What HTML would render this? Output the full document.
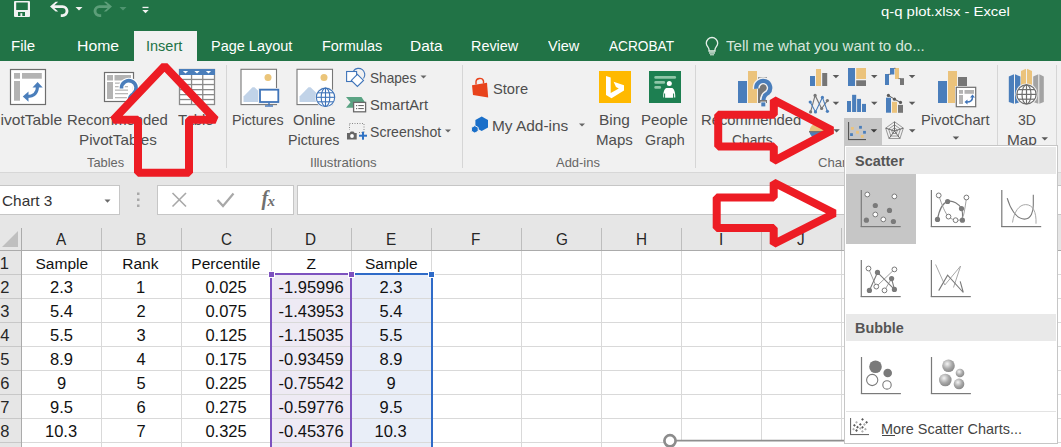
<!DOCTYPE html>
<html><head><meta charset="utf-8">
<style>
html,body{margin:0;padding:0;}
body{width:1061px;height:447px;overflow:hidden;position:relative;background:#fff;font-family:"Liberation Sans",sans-serif;}
.a{position:absolute;}
.tx{position:absolute;white-space:pre;line-height:20px;transform-origin:0 0;font-family:"Liberation Sans",sans-serif;}
svg{position:absolute;overflow:visible;}
</style></head><body>
<div class="a" style="left:0px;top:0px;width:1061px;height:61px;background:#217346;"></div>
<div class="a" style="left:134px;top:31px;width:63px;height:30px;background:#f1f1f1;"></div>
<div class="a" style="left:0px;top:61px;width:1061px;height:111px;background:#f1f1f1;"></div>
<div class="a" style="left:226px;top:65px;width:1px;height:103px;background:#d6d6d6;"></div>
<div class="a" style="left:462px;top:65px;width:1px;height:103px;background:#d6d6d6;"></div>
<div class="a" style="left:695px;top:65px;width:1px;height:103px;background:#d6d6d6;"></div>
<div class="a" style="left:997px;top:65px;width:1px;height:103px;background:#d6d6d6;"></div>
<div class="a" style="left:1056px;top:65px;width:1px;height:103px;background:#d6d6d6;"></div>
<div class="a" style="left:0px;top:172px;width:1061px;height:1px;background:#d7d7d7;"></div>
<div class="a" style="left:0px;top:173px;width:1061px;height:55px;background:#e6e6e6;"></div>
<div class="a" style="left:-1px;top:185px;width:119px;height:28px;background:#ffffff;border:1px solid #c6c6c6;"></div>
<div class="a" style="left:157px;top:185px;width:135px;height:28px;background:#ffffff;border:1px solid #c6c6c6;"></div>
<div class="a" style="left:297px;top:185px;width:800px;height:28px;background:#ffffff;border:1px solid #c6c6c6;"></div>
<div class="a" style="left:0px;top:228px;width:1061px;height:22px;background:#e6e6e6;"></div>
<div class="a" style="left:0px;top:250px;width:1061px;height:1px;background:#ababab;"></div>
<div class="a" style="left:0px;top:251px;width:21px;height:200px;background:#e6e6e6;"></div>
<div class="a" style="left:21px;top:228px;width:1px;height:220px;background:#ababab;"></div>
<div class="a" style="left:101px;top:228px;width:1px;height:22px;background:#bdbdbd;"></div>
<div class="a" style="left:181px;top:228px;width:1px;height:22px;background:#bdbdbd;"></div>
<div class="a" style="left:271px;top:228px;width:1px;height:22px;background:#bdbdbd;"></div>
<div class="a" style="left:351px;top:228px;width:1px;height:22px;background:#bdbdbd;"></div>
<div class="a" style="left:431px;top:228px;width:1px;height:22px;background:#bdbdbd;"></div>
<div class="a" style="left:521px;top:228px;width:1px;height:22px;background:#bdbdbd;"></div>
<div class="a" style="left:601px;top:228px;width:1px;height:22px;background:#bdbdbd;"></div>
<div class="a" style="left:681px;top:228px;width:1px;height:22px;background:#bdbdbd;"></div>
<div class="a" style="left:761px;top:228px;width:1px;height:22px;background:#bdbdbd;"></div>
<div class="a" style="left:841px;top:228px;width:1px;height:22px;background:#bdbdbd;"></div>
<div class="a" style="left:271px;top:275px;width:80px;height:175px;background:#eeeaf4;"></div>
<div class="a" style="left:352px;top:275px;width:80px;height:175px;background:#e9eef8;"></div>
<div class="a" style="left:22px;top:274px;width:1040px;height:1px;background:#d9d9d9;"></div>
<div class="a" style="left:0px;top:274px;width:21px;height:1px;background:#c8c8c8;"></div>
<div class="a" style="left:22px;top:298px;width:1040px;height:1px;background:#d9d9d9;"></div>
<div class="a" style="left:0px;top:298px;width:21px;height:1px;background:#c8c8c8;"></div>
<div class="a" style="left:22px;top:322px;width:1040px;height:1px;background:#d9d9d9;"></div>
<div class="a" style="left:0px;top:322px;width:21px;height:1px;background:#c8c8c8;"></div>
<div class="a" style="left:22px;top:346px;width:1040px;height:1px;background:#d9d9d9;"></div>
<div class="a" style="left:0px;top:346px;width:21px;height:1px;background:#c8c8c8;"></div>
<div class="a" style="left:22px;top:370px;width:1040px;height:1px;background:#d9d9d9;"></div>
<div class="a" style="left:0px;top:370px;width:21px;height:1px;background:#c8c8c8;"></div>
<div class="a" style="left:22px;top:394px;width:1040px;height:1px;background:#d9d9d9;"></div>
<div class="a" style="left:0px;top:394px;width:21px;height:1px;background:#c8c8c8;"></div>
<div class="a" style="left:22px;top:418px;width:1040px;height:1px;background:#d9d9d9;"></div>
<div class="a" style="left:0px;top:418px;width:21px;height:1px;background:#c8c8c8;"></div>
<div class="a" style="left:22px;top:442px;width:1040px;height:1px;background:#d9d9d9;"></div>
<div class="a" style="left:0px;top:442px;width:21px;height:1px;background:#c8c8c8;"></div>
<div class="a" style="left:101px;top:251px;width:1px;height:200px;background:#d9d9d9;"></div>
<div class="a" style="left:181px;top:251px;width:1px;height:200px;background:#d9d9d9;"></div>
<div class="a" style="left:271px;top:251px;width:1px;height:200px;background:#d9d9d9;"></div>
<div class="a" style="left:351px;top:251px;width:1px;height:200px;background:#d9d9d9;"></div>
<div class="a" style="left:431px;top:251px;width:1px;height:200px;background:#d9d9d9;"></div>
<div class="a" style="left:521px;top:251px;width:1px;height:200px;background:#d9d9d9;"></div>
<div class="a" style="left:601px;top:251px;width:1px;height:200px;background:#d9d9d9;"></div>
<div class="a" style="left:681px;top:251px;width:1px;height:200px;background:#d9d9d9;"></div>
<div class="a" style="left:761px;top:251px;width:1px;height:200px;background:#d9d9d9;"></div>
<div class="a" style="left:841px;top:251px;width:1px;height:200px;background:#d9d9d9;"></div>
<div class="a" style="left:270px;top:273px;width:82px;height:2px;background:#7d52bf;"></div>
<div class="a" style="left:270px;top:275px;width:2px;height:175px;background:#7d52bf;"></div>
<div class="a" style="left:350px;top:275px;width:2px;height:175px;background:#7d52bf;"></div>
<div class="a" style="left:352px;top:273px;width:81px;height:2px;background:#2f6bc8;"></div>
<div class="a" style="left:431px;top:275px;width:2px;height:175px;background:#2f6bc8;"></div>
<div class="a" style="left:268px;top:271px;width:7px;height:7px;background:#ffffff;"></div>
<div class="a" style="left:269px;top:272px;width:5px;height:5px;background:#7d52bf;"></div>
<div class="a" style="left:348px;top:271px;width:7px;height:7px;background:#ffffff;"></div>
<div class="a" style="left:349px;top:272px;width:5px;height:5px;background:#7d52bf;"></div>
<div class="a" style="left:428px;top:271px;width:7px;height:7px;background:#ffffff;"></div>
<div class="a" style="left:429px;top:272px;width:5px;height:5px;background:#2f6bc8;"></div>
<div class="a" style="left:672px;top:441px;width:175px;height:6px;background:#ffffff;"></div>
<svg style="left:0;top:0" width="1061" height="447"><line x1="670" y1="440.6" x2="846" y2="440.6" stroke="#8f8f8f" stroke-width="1.6"/><circle cx="670" cy="440.8" r="5.6" fill="#fff" stroke="#8c8c8c" stroke-width="2.7"/></svg>
<div class="a" style="left:844px;top:118px;width:38px;height:28px;background:#c6c6c6;"></div>
<svg style="left:0;top:0" width="1061" height="447" viewBox="0 0 1061 447"><rect x="14" y="1" width="16" height="16" rx="1" fill="#f2f2f2"/><rect x="16.2" y="2.5" width="11.6" height="7.5" fill="#217346"/><rect x="18" y="12" width="7" height="4" fill="#217346"/><rect x="20.4" y="13.2" width="1.9" height="2.8" fill="#f2f2f2"/><g fill="#f2f2f2" stroke="#f2f2f2" stroke-width="0"><polygon points="50,6.6 55.6,1.7 58.2,1.7 54.4,5.2 54.4,8 58.2,11.5 55.6,11.5"/><path d="M54 6.6 H62.5 A4.5 4.5 0 0 1 62.5 15.6 H60.8" fill="none" stroke-width="2.9"/></g><polygon points="75.5,7 82.5,7 79,10.5" fill="#f2f2f2"/><g fill="#5c9e79" stroke="#5c9e79" stroke-width="0" transform="translate(162,0) scale(-1,1)"><polygon points="50,6.6 55.6,1.7 58.2,1.7 54.4,5.2 54.4,8 58.2,11.5 55.6,11.5"/><path d="M54 6.6 H62.5 A4.5 4.5 0 0 1 62.5 15.6 H60.8" fill="none" stroke-width="2.9"/></g><polygon points="119.5,7 126.5,7 123,10.5" fill="#4f9470"/><rect x="142.5" y="6.8" width="6" height="1.3" fill="#f2f2f2"/><polygon points="142.3,10 148.7,10 145.5,13.2" fill="#f2f2f2"/><path d="M709 51 V49.5 C709 47.5 706.3 46 706.3 43.2 A5.7 5.7 0 0 1 717.7 43.2 C717.7 46 715 47.5 715 49.5 V51 Z" fill="none" stroke="#e6efe9" stroke-width="1.3"/><rect x="709" y="52.3" width="6" height="1.3" fill="#e6efe9"/><rect x="710" y="54.3" width="4" height="1" fill="#e6efe9"/><rect x="10.5" y="69.5" width="35" height="35" fill="#fff" stroke="#6e6e6e" stroke-width="1.2"/><rect x="14" y="73" width="6" height="5.7" fill="#b3b3b3"/><rect x="22" y="73" width="19.8" height="5.7" fill="#b3b3b3"/><rect x="14" y="81" width="6" height="19.7" fill="#b3b3b3"/><path d="M27 96.5 Q37.5 96.5 37.5 86" fill="none" stroke="#4a7ebb" stroke-width="3"/><polygon points="22.8,96.6 28.5,91.5 28.5,101.7" fill="#4a7ebb"/><polygon points="37.6,82 32.5,87.5 42.7,87.5" fill="#4a7ebb"/><rect x="104.5" y="72.5" width="29" height="29" fill="#fff" stroke="#6e6e6e" stroke-width="1.2"/><rect x="107" y="75" width="6" height="5.5" fill="#b3b3b3"/><rect x="114.5" y="75" width="16.5" height="5.5" fill="#b3b3b3"/><rect x="107" y="82" width="6" height="17" fill="#b3b3b3"/><rect x="115" y="82.5" width="13" height="1.3" fill="#b8b8b8"/><rect x="115" y="86" width="13" height="1.3" fill="#b8b8b8"/><rect x="115" y="89.5" width="13" height="1.3" fill="#b8b8b8"/><rect x="115" y="93" width="13" height="1.3" fill="#b8b8b8"/><rect x="115" y="97" width="13" height="1.3" fill="#b8b8b8"/><path d="M121.5 88.5 A7.3 7.3 0 1 1 133 94 Q129.5 96 129.5 100" fill="none" stroke="#fff" stroke-width="6"/><path d="M121.5 88.5 A7.3 7.3 0 1 1 133 94 Q129.5 96 129.5 100" fill="none" stroke="#4a7ebb" stroke-width="3.6"/><rect x="179.5" y="69.5" width="35" height="35" fill="#fff" stroke="#8a8a8a" stroke-width="1.3"/><rect x="179" y="69" width="36" height="6" fill="#4a7ebb"/><polygon points="182.9,71 188.1,71 185.5,73.6" fill="#fff"/><polygon points="194.4,71 199.6,71 197,73.6" fill="#fff"/><polygon points="205.9,71 211.1,71 208.5,73.6" fill="#fff"/><rect x="190.9" y="75" width="1.3" height="29" fill="#8a8a8a"/><rect x="202.1" y="75" width="1.3" height="29" fill="#8a8a8a"/><rect x="179.5" y="78.80000000000001" width="35" height="1.3" fill="#8a8a8a"/><rect x="179.5" y="83.9" width="35" height="1.3" fill="#8a8a8a"/><rect x="179.5" y="89.0" width="35" height="1.3" fill="#8a8a8a"/><rect x="179.5" y="94.0" width="35" height="1.3" fill="#8a8a8a"/><rect x="179.5" y="98.9" width="35" height="1.3" fill="#8a8a8a"/><rect x="241.0" y="69.3" width="35.5" height="35.3" fill="#fff" stroke="#777" stroke-width="1.1"/><circle cx="268.0" cy="77.4" r="3.5" fill="#ebc57a"/><polygon points="243.5,102 243.5,96.5 252.5,87.3 254.5,87.3 260.5,93 260.5,102" fill="#c1d3e8"/><rect x="258" y="88" width="22" height="16" fill="#f1f1f1"/><rect x="260" y="89.7" width="18.3" height="12.3" fill="#fff" stroke="#3f74b9" stroke-width="1.8"/><rect x="268.3" y="102.5" width="1.4" height="3" fill="#3f74b9"/><rect x="265" y="105.3" width="8" height="1.4" fill="#3f74b9"/><rect x="297.0" y="69.3" width="35.5" height="35.3" fill="#fff" stroke="#777" stroke-width="1.1"/><circle cx="324.0" cy="77.4" r="3.5" fill="#ebc57a"/><polygon points="299.5,102 299.5,96.5 308.5,87.3 310.5,87.3 316.5,93 316.5,102" fill="#c1d3e8"/><circle cx="325.5" cy="97.3" r="10.5" fill="#f1f1f1"/><g fill="none" stroke="#3f74b9" stroke-width="1.1"><circle cx="325.5" cy="97.3" r="9.2" fill="#fff"/><ellipse cx="325.5" cy="97.3" rx="4.3" ry="9.2"/><line x1="325.5" y1="88.1" x2="325.5" y2="106.5"/><line x1="316.3" y1="97.3" x2="334.7" y2="97.3"/><line x1="317.5" y1="92.8" x2="333.5" y2="92.8"/><line x1="317.5" y1="101.8" x2="333.5" y2="101.8"/></g><g fill="#fff" stroke="#3f74b9" stroke-width="1.1"><path d="M353.5 70.8 A6.3 6.3 0 1 1 363.5 78.5" fill="none"/><rect x="346.6" y="71.5" width="10" height="10"/><polygon points="357.4,74.3 363.5,80.4 357.4,86.5 351.3,80.4"/></g><polygon points="346,97 361.5,97 365,102.3 361.5,107.7 346,107.7 350.5,102.3" fill="#5aa383"/><rect x="353.6" y="102.4" width="12" height="9.4" fill="#fff" stroke="#6a6a6a" stroke-width="1.3"/><g fill="#6a6a6a"><rect x="356" y="105" width="1.2" height="1.2"/><rect x="358.3" y="105" width="5.5" height="1.1"/><rect x="356" y="108" width="1.2" height="1.2"/><rect x="358.3" y="108" width="5.5" height="1.1"/></g><rect x="349.5" y="123.5" width="14.5" height="9" fill="none" stroke="#888" stroke-width="1" stroke-dasharray="1,1.5"/><rect x="346.5" y="130" width="12" height="10" fill="#f1f1f1"/><path d="M347 133 h2.5 l1.3 -1.6 h2.6 l1.3 1.6 h2 v6.5 h-9.7 z" fill="#666"/><circle cx="352" cy="136" r="1.9" fill="#fff"/><rect x="359" y="134.7" width="8" height="2" fill="#2e72c4"/><rect x="362" y="131.7" width="2" height="8" fill="#2e72c4"/><polygon points="420.5,75.5 426.5,75.5 423.5,78.5" fill="#666"/><polygon points="445,129.5 451,129.5 448,132.5" fill="#666"/><path d="M476 84.5 V81.5 A3.8 3.3 0 0 1 483.5 81 V83.5" fill="none" stroke="#e8431c" stroke-width="1.4"/><polygon points="472,85.3 487,82.8 488.2,97.6 473,95" fill="#e8431c"/><polygon points="481.7,116.4 488,120 488,127.5 481.7,131 475.4,127.5 475.4,120" fill="#1a6fc9"/><polygon points="474.8,125.6 478.2,127.5 478.2,131.2 474.8,133.1 471.4,131.2 471.4,127.5" fill="#1a6fc9" stroke="#f1f1f1" stroke-width="1"/><polygon points="579,123.5 585,123.5 582,126.5" fill="#666"/><rect x="599" y="71" width="32" height="32" fill="#ffb900"/><polygon points="606,76 610.7,77.5 610.7,93 618.8,88.5 616,87 613.6,81.7 624,85.3 624,90.6 611.5,98.3 606,95" fill="#fff"/><rect x="649" y="71" width="32" height="32" fill="#1d7f51"/><g fill="#8fc6a8"><rect x="654.3" y="76" width="21.8" height="2.7" rx="1.3"/><rect x="654.3" y="81" width="10.8" height="2.7" rx="1.3"/><rect x="654.3" y="86" width="6.8" height="2.7" rx="1.3"/></g><circle cx="669.3" cy="83.5" r="2.5" fill="#fff"/><path d="M663.3 97.5 C663 92 664.5 88.5 666.5 88 h5.5 C674 88.5 675.5 92 675.3 97.5 h-1.2 v-4 h-1 v4.2 h-8 v-4.2 h-1 v4 z" fill="#fff"/><rect x="738" y="81" width="9" height="22" fill="#4a7ebb"/><rect x="748" y="71" width="9" height="32" fill="#ebc37c"/><rect x="758" y="77.3" width="9" height="25.7" fill="#767676"/><path d="M756.3 88.8 A7 7 0 1 1 768 93 Q763.5 95.5 763.5 100" fill="none" stroke="#f1f1f1" stroke-width="7"/><path d="M756.3 88.8 A7 7 0 1 1 768 93 Q763.5 95.5 763.5 100" fill="none" stroke="#4a7ebb" stroke-width="4.2"/><rect x="760.5" y="101.6" width="5.5" height="5.5" fill="#f1f1f1"/><rect x="761.3" y="102.4" width="4" height="4" fill="#4a7ebb"/><rect x="810" y="76" width="5" height="10" fill="#4a7ebb"/><rect x="816" y="69" width="5" height="17" fill="#ebc37c"/><rect x="822.2" y="73" width="5" height="13" fill="#767676"/><polygon points="832.7,75 839.2,75 835.95,78.2" fill="#5a5a5a"/><rect x="848" y="68" width="7" height="18" fill="#4a7ebb"/><rect x="856.2" y="68" width="9.8" height="11" fill="#ebc37c"/><rect x="856.2" y="80.3" width="9.8" height="5.7" fill="#767676"/><polygon points="871,75 877.5,75 874.25,78.2" fill="#5a5a5a"/><rect x="885" y="74" width="4" height="11" fill="#4a7ebb"/><rect x="890" y="68" width="4.3" height="6.5" fill="#4a7ebb"/><rect x="895" y="68" width="4" height="11" fill="#ebc37c"/><rect x="900" y="78.2" width="4" height="6.8" fill="#767676"/><g stroke="#5a5a5a" stroke-width="0.8"><line x1="888.5" y1="74.3" x2="890.5" y2="74.3"/><line x1="894" y1="68.3" x2="895.5" y2="68.3"/><line x1="898.5" y1="78.6" x2="900.5" y2="78.6"/></g><polygon points="908.8,75 915.3,75 912.05,78.2" fill="#5a5a5a"/><polyline points="810.6,111.9 815.1,95.4 821.6,108.5 827.4,100.6" fill="none" stroke="#767676" stroke-width="1.1"/><polyline points="810.2,102 815.5,111.9 822.4,97.4 827.4,111.3" fill="none" stroke="#4a7ebb" stroke-width="1.1"/><circle cx="810.6" cy="111.9" r="1.6" fill="#767676"/><circle cx="815.1" cy="95.4" r="1.6" fill="#767676"/><circle cx="821.6" cy="108.5" r="1.6" fill="#767676"/><circle cx="827.4" cy="100.6" r="1.6" fill="#767676"/><circle cx="810.2" cy="102" r="1.6" fill="#4a7ebb"/><circle cx="815.5" cy="111.9" r="1.6" fill="#4a7ebb"/><circle cx="822.4" cy="97.4" r="1.6" fill="#4a7ebb"/><circle cx="827.4" cy="111.3" r="1.6" fill="#4a7ebb"/><polygon points="832.7,101.8 839.2,101.8 835.95,105.0" fill="#5a5a5a"/><g fill="#4a7ebb"><rect x="847" y="101" width="4" height="11"/><rect x="852.1" y="94.8" width="4.1" height="17.2"/><rect x="857.1" y="98.9" width="3.9" height="13.1"/><rect x="862" y="103.9" width="4" height="8.1"/></g><polygon points="871,101.8 877.5,101.8 874.25,105.0" fill="#5a5a5a"/><rect x="886" y="97.7" width="5" height="15" fill="#4a7ebb"/><rect x="892" y="101.8" width="5" height="11" fill="#ebc37c"/><rect x="898" y="104.9" width="5" height="7.9" fill="#767676"/><polyline points="888.4,95.4 894.5,99.2 900.5,102.4" fill="none" stroke="#5a5a5a" stroke-width="1"/><circle cx="888.4" cy="95.4" r="1.6" fill="#5a5a5a"/><circle cx="894.5" cy="99.2" r="1.6" fill="#5a5a5a"/><circle cx="900.5" cy="102.4" r="1.6" fill="#5a5a5a"/><polygon points="908.8,101.8 915.3,101.8 912.05,105.0" fill="#5a5a5a"/><path d="M817 131 L809.5 131 A7.5 7.5 0 0 1 824.5 131 Z" fill="#ebc37c"/><path d="M817 131 L824.5 131 A7.5 7.5 0 0 1 809.5 131 Z" fill="#4a7ebb"/><rect x="809" y="131" width="16" height="1.5" fill="#767676"/><polygon points="833.3,129.3 839.8,129.3 836.55,132.5" fill="#5a5a5a"/><rect x="848" y="122" width="1.1" height="18" fill="#555"/><rect x="848" y="139" width="18" height="1.1" fill="#555"/><rect x="851.0" y="127.0" width="2.8" height="2.8" fill="#ebc37c"/><rect x="859.1" y="125.89999999999999" width="2.8" height="2.8" fill="#4a7ebb"/><rect x="856.1" y="130.9" width="2.8" height="2.8" fill="#ebc37c"/><rect x="863.1" y="130.9" width="2.8" height="2.8" fill="#4a7ebb"/><rect x="850.1" y="133.2" width="2.8" height="2.8" fill="#4a7ebb"/><rect x="860.8000000000001" y="135.0" width="2.8" height="2.8" fill="#ebc37c"/><polygon points="870.7,129.2 877.2,129.2 873.95,132.39999999999998" fill="#3b3b3b"/><g fill="none" stroke="#8c8c8c" stroke-width="0.9"><polygon points="894.50,121.70 903.34,128.13 899.97,138.52 889.03,138.52 885.66,128.13"/><polygon points="894.50,124.80 900.40,129.08 898.14,136.02 890.86,136.02 888.60,129.08"/><polygon points="894.50,127.90 897.45,130.04 896.32,133.51 892.68,133.51 891.55,130.04"/></g><g stroke="#6a6a6a" stroke-width="1"><line x1="894.5" y1="131" x2="894.50" y2="121.70"/><line x1="894.5" y1="131" x2="903.34" y2="128.13"/><line x1="894.5" y1="131" x2="899.97" y2="138.52"/><line x1="894.5" y1="131" x2="889.03" y2="138.52"/><line x1="894.5" y1="131" x2="885.66" y2="128.13"/></g><polygon points="909,129.3 915.5,129.3 912.25,132.5" fill="#5a5a5a"/><rect x="938" y="81" width="9" height="22" fill="#4a7ebb"/><rect x="948" y="71" width="9" height="32" fill="#ebc37c"/><rect x="958" y="77" width="9" height="10" fill="#767676"/><rect x="955" y="86" width="22" height="22" fill="#f1f1f1"/><rect x="956.3" y="87.3" width="19.4" height="19.4" fill="#fff" stroke="#6e6e6e" stroke-width="1.2"/><rect x="959" y="90" width="4" height="3.8" fill="#b3b3b3"/><rect x="964.5" y="90" width="9.5" height="3.8" fill="#b3b3b3"/><rect x="959" y="95" width="4" height="9" fill="#b3b3b3"/><path d="M967 102 Q972.5 102 972.5 97" fill="none" stroke="#3f74b9" stroke-width="1.5"/><polygon points="964.5,102 967.5,99.5 967.5,104.5" fill="#3f74b9"/><polygon points="972.5,94.5 970,97.5 975,97.5" fill="#3f74b9"/><polygon points="952.7,136.5 959.2,136.5 955.95,139.7" fill="#5a5a5a"/><polygon points="1008.8,76.5 1014,74.3 1014,103.8 1008.8,102" fill="#4a7ebb"/><polygon points="1015,74.3 1020.4,76.5 1020.4,102 1015,103.8" fill="#4a7ebb"/><polygon points="1021,71 1026,68.8 1026,90 1021,90" fill="#ebc37c"/><polygon points="1027,68.8 1032,71 1032,90 1027,90" fill="#ebc37c"/><polygon points="1033.2,76.5 1038.3,74.3 1038.3,103.8 1033.2,102" fill="#a3a3a3"/><polygon points="1039.3,74.3 1043.8,76.5 1043.8,102 1039.3,103.8" fill="#a3a3a3"/><circle cx="1026.5" cy="94.4" r="11" fill="#f1f1f1"/><g fill="none" stroke="#6e6e6e" stroke-width="1.2"><circle cx="1026.5" cy="94.4" r="9.6" fill="#fff"/><ellipse cx="1026.5" cy="94.4" rx="4.5" ry="9.6"/><line x1="1026.5" y1="84.8" x2="1026.5" y2="104"/><line x1="1016.9" y1="94.4" x2="1036.1" y2="94.4"/><line x1="1018" y1="89.6" x2="1035" y2="89.6"/><line x1="1018" y1="99.2" x2="1035" y2="99.2"/></g><polygon points="1041.5,137.2 1048.0,137.2 1044.75,140.39999999999998" fill="#5a5a5a"/><polygon points="104.5,199.5 110.5,199.5 107.5,202.8" fill="#6a6a6a"/><rect x="137" y="192.5" width="2.5" height="2.5" fill="#a8a8a8"/><rect x="137" y="198.5" width="2.5" height="2.5" fill="#a8a8a8"/><rect x="137" y="204.5" width="2.5" height="2.5" fill="#a8a8a8"/><g stroke="#a8a8a8" stroke-width="1.6"><line x1="172.5" y1="193" x2="186" y2="206.5"/><line x1="186" y1="193" x2="172.5" y2="206.5"/></g><polyline points="217.5,200 223,206 233.5,193.5" fill="none" stroke="#a8a8a8" stroke-width="2.2"/><text x="261.5" y="205" font-family="Liberation Serif" font-style="italic" font-weight="bold" font-size="20" fill="#707070">f</text><text x="267.5" y="206" font-family="Liberation Serif" font-style="italic" font-weight="bold" font-size="15" fill="#707070">x</text><polygon points="18,231 18,247 2,247" fill="#bfbfbf"/></svg>
<span class="tx" style="left:881.00px;top:2px;font-size:13px;color:#ffffff;font-weight:normal;transform:scaleX(1.1435)">q-q plot.xlsx - Excel</span>
<span class="tx" style="left:11.33px;top:36px;font-size:15.5px;color:#ffffff;font-weight:normal;transform:scaleX(0.9677)">File</span>
<span class="tx" style="left:76.58px;top:36px;font-size:15.5px;color:#ffffff;font-weight:normal;transform:scaleX(1.0170)">Home</span>
<span class="tx" style="left:211.07px;top:36px;font-size:15.5px;color:#ffffff;font-weight:normal;transform:scaleX(0.9339)">Page Layout</span>
<span class="tx" style="left:321.57px;top:36px;font-size:15.5px;color:#ffffff;font-weight:normal;transform:scaleX(0.9319)">Formulas</span>
<span class="tx" style="left:410.00px;top:36px;font-size:15.5px;color:#ffffff;font-weight:normal;transform:scaleX(0.9963)">Data</span>
<span class="tx" style="left:471.07px;top:36px;font-size:15.5px;color:#ffffff;font-weight:normal;transform:scaleX(0.9283)">Review</span>
<span class="tx" style="left:548.00px;top:36px;font-size:15.5px;color:#ffffff;font-weight:normal;transform:scaleX(0.9378)">View</span>
<span class="tx" style="left:609.00px;top:36px;font-size:15.5px;color:#ffffff;font-weight:normal;transform:scaleX(0.8815)">ACROBAT</span>
<span class="tx" style="left:146.06px;top:36px;font-size:15.5px;color:#217346;font-weight:normal;transform:scaleX(0.9361)">Insert</span>
<span class="tx" style="left:725.50px;top:36px;font-size:15.5px;color:#d7e6dc;font-weight:normal;transform:scaleX(0.9735)">Tell me what you want to do...</span>
<span class="tx" style="left:-10.08px;top:110px;font-size:14.5px;color:#4e4e4e;font-weight:normal;transform:scaleX(1.0784)">PivotTable</span>
<span class="tx" style="left:67.47px;top:110px;font-size:14.5px;color:#4e4e4e;font-weight:normal;transform:scaleX(1.0261)">Recommended</span>
<span class="tx" style="left:79.45px;top:130px;font-size:14.5px;color:#4e4e4e;font-weight:normal;transform:scaleX(1.0494)">PivotTables</span>
<span class="tx" style="left:178.40px;top:110px;font-size:14.5px;color:#4e4e4e;font-weight:normal;transform:scaleX(1.0289)">Table</span>
<span class="tx" style="left:87.10px;top:153px;font-size:13px;color:#666666;font-weight:normal;transform:scaleX(0.9874)">Tables</span>
<span class="tx" style="left:232.42px;top:110px;font-size:14.5px;color:#4e4e4e;font-weight:normal;transform:scaleX(0.9838)">Pictures</span>
<span class="tx" style="left:293.00px;top:110px;font-size:14.5px;color:#4e4e4e;font-weight:normal;transform:scaleX(1.0155)">Online</span>
<span class="tx" style="left:288.32px;top:130px;font-size:14.5px;color:#4e4e4e;font-weight:normal;transform:scaleX(0.9818)">Pictures</span>
<span class="tx" style="left:309.79px;top:153px;font-size:13px;color:#666666;font-weight:normal;transform:scaleX(1.0146)">Illustrations</span>
<span class="tx" style="left:369.50px;top:68px;font-size:14.5px;color:#4e4e4e;font-weight:normal;transform:scaleX(0.9402)">Shapes</span>
<span class="tx" style="left:369.50px;top:95px;font-size:14.5px;color:#4e4e4e;font-weight:normal;transform:scaleX(1.0145)">SmartArt</span>
<span class="tx" style="left:369.50px;top:122px;font-size:14.5px;color:#4e4e4e;font-weight:normal;transform:scaleX(0.9697)">Screenshot</span>
<span class="tx" style="left:493.00px;top:79px;font-size:14.5px;color:#4e4e4e;font-weight:normal;transform:scaleX(1.0118)">Store</span>
<span class="tx" style="left:491.94px;top:116px;font-size:14.5px;color:#4e4e4e;font-weight:normal;transform:scaleX(1.0635)">My Add-ins</span>
<span class="tx" style="left:598.94px;top:110px;font-size:14.5px;color:#4e4e4e;font-weight:normal;transform:scaleX(1.0623)">Bing</span>
<span class="tx" style="left:596.46px;top:130px;font-size:14.5px;color:#4e4e4e;font-weight:normal;transform:scaleX(1.0378)">Maps</span>
<span class="tx" style="left:640.96px;top:110px;font-size:14.5px;color:#4e4e4e;font-weight:normal;transform:scaleX(1.0366)">People</span>
<span class="tx" style="left:645.30px;top:130px;font-size:14.5px;color:#4e4e4e;font-weight:normal;transform:scaleX(0.9867)">Graph</span>
<span class="tx" style="left:556.00px;top:153px;font-size:13px;color:#666666;font-weight:normal;transform:scaleX(0.9960)">Add-ins</span>
<span class="tx" style="left:701.38px;top:110px;font-size:14.5px;color:#4e4e4e;font-weight:normal;transform:scaleX(1.0199)">Recommended</span>
<span class="tx" style="left:732.00px;top:130px;font-size:14.5px;color:#4e4e4e;font-weight:normal;transform:scaleX(0.9516)">Charts</span>
<span class="tx" style="left:818.00px;top:153px;font-size:13px;color:#666666;font-weight:normal;transform:scaleX(1.0054)">Charts</span>
<span class="tx" style="left:921.49px;top:110px;font-size:14.5px;color:#4e4e4e;font-weight:normal;transform:scaleX(1.0125)">PivotChart</span>
<span class="tx" style="left:1017.70px;top:110px;font-size:14.5px;color:#4e4e4e;font-weight:normal;transform:scaleX(0.9688)">3D</span>
<span class="tx" style="left:1006.54px;top:130px;font-size:14.5px;color:#4e4e4e;font-weight:normal;transform:scaleX(1.0611)">Map</span>
<span class="tx" style="left:2.00px;top:191px;font-size:15px;color:#333333;font-weight:normal;transform:scaleX(1.0236)">Chart 3</span>
<span class="tx" style="left:56.10px;top:230px;font-size:17px;color:#262626;font-weight:normal;transform:scaleX(0.9000)">A</span>
<span class="tx" style="left:135.60px;top:230px;font-size:17px;color:#262626;font-weight:normal;transform:scaleX(0.9000)">B</span>
<span class="tx" style="left:220.60px;top:230px;font-size:17px;color:#262626;font-weight:normal;transform:scaleX(0.9000)">C</span>
<span class="tx" style="left:305.15px;top:230px;font-size:17px;color:#262626;font-weight:normal;transform:scaleX(0.9000)">D</span>
<span class="tx" style="left:385.60px;top:230px;font-size:17px;color:#262626;font-weight:normal;transform:scaleX(0.9000)">E</span>
<span class="tx" style="left:471.05px;top:230px;font-size:17px;color:#262626;font-weight:normal;transform:scaleX(0.9000)">F</span>
<span class="tx" style="left:555.60px;top:230px;font-size:17px;color:#262626;font-weight:normal;transform:scaleX(0.9000)">G</span>
<span class="tx" style="left:635.60px;top:230px;font-size:17px;color:#262626;font-weight:normal;transform:scaleX(0.9000)">H</span>
<span class="tx" style="left:718.75px;top:230px;font-size:17px;color:#262626;font-weight:normal;transform:scaleX(0.9000)">I</span>
<span class="tx" style="left:797.40px;top:230px;font-size:17px;color:#262626;font-weight:normal;transform:scaleX(0.9000)">J</span>
<span class="tx" style="left:35.53px;top:254px;font-size:15.5px;color:#111111;font-weight:normal;transform:scaleX(1.0000)">Sample</span>
<span class="tx" style="left:122.28px;top:254px;font-size:15.5px;color:#111111;font-weight:normal;transform:scaleX(1.0000)">Rank</span>
<span class="tx" style="left:191.35px;top:254px;font-size:15.5px;color:#111111;font-weight:normal;transform:scaleX(1.0000)">Percentile</span>
<span class="tx" style="left:306.50px;top:254px;font-size:15.5px;color:#111111;font-weight:normal;transform:scaleX(1.0000)">Z</span>
<span class="tx" style="left:365.03px;top:254px;font-size:15.5px;color:#111111;font-weight:normal;transform:scaleX(1.0000)">Sample</span>
<span class="tx" style="left:50.12px;top:277px;font-size:16.5px;color:#111111;font-weight:normal;transform:scaleX(1.0000)">2.3</span>
<span class="tx" style="left:136.00px;top:277px;font-size:16.5px;color:#111111;font-weight:normal;transform:scaleX(1.0000)">1</span>
<span class="tx" style="left:205.44px;top:277px;font-size:16.5px;color:#111111;font-weight:normal;transform:scaleX(1.0000)">0.025</span>
<span class="tx" style="left:278.52px;top:277px;font-size:16.5px;color:#111111;font-weight:normal;transform:scaleX(1.0000)">-1.95996</span>
<span class="tx" style="left:379.62px;top:277px;font-size:16.5px;color:#111111;font-weight:normal;transform:scaleX(1.0000)">2.3</span>
<span class="tx" style="left:50.12px;top:301px;font-size:16.5px;color:#111111;font-weight:normal;transform:scaleX(1.0000)">5.4</span>
<span class="tx" style="left:136.50px;top:301px;font-size:16.5px;color:#111111;font-weight:normal;transform:scaleX(1.0000)">2</span>
<span class="tx" style="left:205.44px;top:301px;font-size:16.5px;color:#111111;font-weight:normal;transform:scaleX(1.0000)">0.075</span>
<span class="tx" style="left:278.52px;top:301px;font-size:16.5px;color:#111111;font-weight:normal;transform:scaleX(1.0000)">-1.43953</span>
<span class="tx" style="left:379.62px;top:301px;font-size:16.5px;color:#111111;font-weight:normal;transform:scaleX(1.0000)">5.4</span>
<span class="tx" style="left:50.12px;top:325px;font-size:16.5px;color:#111111;font-weight:normal;transform:scaleX(1.0000)">5.5</span>
<span class="tx" style="left:136.50px;top:325px;font-size:16.5px;color:#111111;font-weight:normal;transform:scaleX(1.0000)">3</span>
<span class="tx" style="left:205.44px;top:325px;font-size:16.5px;color:#111111;font-weight:normal;transform:scaleX(1.0000)">0.125</span>
<span class="tx" style="left:278.52px;top:325px;font-size:16.5px;color:#111111;font-weight:normal;transform:scaleX(1.0000)">-1.15035</span>
<span class="tx" style="left:379.62px;top:325px;font-size:16.5px;color:#111111;font-weight:normal;transform:scaleX(1.0000)">5.5</span>
<span class="tx" style="left:50.12px;top:349px;font-size:16.5px;color:#111111;font-weight:normal;transform:scaleX(1.0000)">8.9</span>
<span class="tx" style="left:136.50px;top:349px;font-size:16.5px;color:#111111;font-weight:normal;transform:scaleX(1.0000)">4</span>
<span class="tx" style="left:205.44px;top:349px;font-size:16.5px;color:#111111;font-weight:normal;transform:scaleX(1.0000)">0.175</span>
<span class="tx" style="left:278.52px;top:349px;font-size:16.5px;color:#111111;font-weight:normal;transform:scaleX(1.0000)">-0.93459</span>
<span class="tx" style="left:379.62px;top:349px;font-size:16.5px;color:#111111;font-weight:normal;transform:scaleX(1.0000)">8.9</span>
<span class="tx" style="left:57.00px;top:373px;font-size:16.5px;color:#111111;font-weight:normal;transform:scaleX(1.0000)">9</span>
<span class="tx" style="left:136.50px;top:373px;font-size:16.5px;color:#111111;font-weight:normal;transform:scaleX(1.0000)">5</span>
<span class="tx" style="left:205.44px;top:373px;font-size:16.5px;color:#111111;font-weight:normal;transform:scaleX(1.0000)">0.225</span>
<span class="tx" style="left:278.52px;top:373px;font-size:16.5px;color:#111111;font-weight:normal;transform:scaleX(1.0000)">-0.75542</span>
<span class="tx" style="left:386.50px;top:373px;font-size:16.5px;color:#111111;font-weight:normal;transform:scaleX(1.0000)">9</span>
<span class="tx" style="left:50.12px;top:397px;font-size:16.5px;color:#111111;font-weight:normal;transform:scaleX(1.0000)">9.5</span>
<span class="tx" style="left:136.50px;top:397px;font-size:16.5px;color:#111111;font-weight:normal;transform:scaleX(1.0000)">6</span>
<span class="tx" style="left:205.44px;top:397px;font-size:16.5px;color:#111111;font-weight:normal;transform:scaleX(1.0000)">0.275</span>
<span class="tx" style="left:278.52px;top:397px;font-size:16.5px;color:#111111;font-weight:normal;transform:scaleX(1.0000)">-0.59776</span>
<span class="tx" style="left:379.62px;top:397px;font-size:16.5px;color:#111111;font-weight:normal;transform:scaleX(1.0000)">9.5</span>
<span class="tx" style="left:45.03px;top:421px;font-size:16.5px;color:#111111;font-weight:normal;transform:scaleX(1.0000)">10.3</span>
<span class="tx" style="left:136.50px;top:421px;font-size:16.5px;color:#111111;font-weight:normal;transform:scaleX(1.0000)">7</span>
<span class="tx" style="left:205.44px;top:421px;font-size:16.5px;color:#111111;font-weight:normal;transform:scaleX(1.0000)">0.325</span>
<span class="tx" style="left:278.52px;top:421px;font-size:16.5px;color:#111111;font-weight:normal;transform:scaleX(1.0000)">-0.45376</span>
<span class="tx" style="left:374.53px;top:421px;font-size:16.5px;color:#111111;font-weight:normal;transform:scaleX(1.0000)">10.3</span>
<span class="tx" style="left:-0.30px;top:253px;font-size:16.5px;color:#262626;font-weight:normal;transform:scaleX(1.0000)">1</span>
<span class="tx" style="left:0.20px;top:277px;font-size:16.5px;color:#262626;font-weight:normal;transform:scaleX(1.0000)">2</span>
<span class="tx" style="left:0.20px;top:301px;font-size:16.5px;color:#262626;font-weight:normal;transform:scaleX(1.0000)">3</span>
<span class="tx" style="left:0.20px;top:325px;font-size:16.5px;color:#262626;font-weight:normal;transform:scaleX(1.0000)">4</span>
<span class="tx" style="left:0.20px;top:349px;font-size:16.5px;color:#262626;font-weight:normal;transform:scaleX(1.0000)">5</span>
<span class="tx" style="left:0.20px;top:373px;font-size:16.5px;color:#262626;font-weight:normal;transform:scaleX(1.0000)">6</span>
<span class="tx" style="left:0.20px;top:397px;font-size:16.5px;color:#262626;font-weight:normal;transform:scaleX(1.0000)">7</span>
<span class="tx" style="left:0.20px;top:421px;font-size:16.5px;color:#262626;font-weight:normal;transform:scaleX(1.0000)">8</span>
<div class="a" style="left:844px;top:145px;width:214px;height:299px;background:#c6c6c6"></div>
<div class="a" style="left:845px;top:146px;width:212px;height:297px;background:#fff"></div>
<div class="a" style="left:846px;top:147px;width:210px;height:27px;background:#e9e9e9"></div>
<div class="a" style="left:846px;top:174px;width:70px;height:70px;background:#c6c6c6"></div>
<div class="a" style="left:846px;top:314px;width:210px;height:27px;background:#e9e9e9"></div>
<div class="a" style="left:846px;top:411px;width:210px;height:1px;background:#e3e3e3"></div><svg style="left:0;top:0" width="1061" height="447" viewBox="0 0 1061 447"><rect x="860.7" y="190" width="1.2" height="37" fill="#7a7a7a"/><rect x="860.7" y="226" width="40" height="1.2" fill="#7a7a7a"/><circle cx="867.3" cy="194.5" r="2.4" fill="#fff" stroke="#7a7a7a" stroke-width="1"/><circle cx="894.4" cy="196.4" r="2.4" fill="#fff" stroke="#7a7a7a" stroke-width="1"/><circle cx="875.3" cy="214.5" r="2.4" fill="#fff" stroke="#7a7a7a" stroke-width="1"/><circle cx="883.3" cy="219.4" r="2.4" fill="#fff" stroke="#7a7a7a" stroke-width="1"/><circle cx="875.3" cy="205.5" r="2.6" fill="#7a7a7a"/><circle cx="889.5" cy="210.4" r="2.6" fill="#7a7a7a"/><circle cx="866.4" cy="220.2" r="2.6" fill="#7a7a7a"/><circle cx="893.4" cy="221.5" r="2.6" fill="#7a7a7a"/><rect x="930.8" y="190" width="1.2" height="37" fill="#7a7a7a"/><rect x="930.8" y="226" width="40" height="1.2" fill="#7a7a7a"/><path d="M937.5 219.4 C939 210 943 203 947.6 201.5 C953 200 959 204 961.5 208.6 C963 212 962.5 217 962.4 220.2" fill="none" stroke="#7a7a7a" stroke-width="1.1"/><path d="M938.7 195.4 C942 205 945 213 948.5 216.6 C951 219 954 220 955.6 220.2 C960 221 963 219 964 213 C965 208 966 202 966.4 197.5" fill="none" stroke="#a0a0a0" stroke-width="1"/><circle cx="938.7" cy="195.4" r="2.4" fill="#fff" stroke="#7a7a7a" stroke-width="1"/><circle cx="966.4" cy="197.5" r="2.4" fill="#fff" stroke="#7a7a7a" stroke-width="1"/><circle cx="948.5" cy="216.6" r="2.4" fill="#fff" stroke="#7a7a7a" stroke-width="1"/><circle cx="955.6" cy="220.2" r="2.4" fill="#fff" stroke="#7a7a7a" stroke-width="1"/><circle cx="937.5" cy="219.4" r="2.6" fill="#7a7a7a"/><circle cx="947.6" cy="201.5" r="2.6" fill="#7a7a7a"/><circle cx="961.5" cy="208.6" r="2.6" fill="#7a7a7a"/><circle cx="962.4" cy="220.2" r="2.6" fill="#7a7a7a"/><rect x="1001.2" y="190" width="1.2" height="37" fill="#7a7a7a"/><rect x="1001.2" y="226" width="40" height="1.2" fill="#7a7a7a"/><path d="M1007.2 198.2 C1010 208 1016 219 1024.5 219.1 C1031 219 1033.5 212 1033.3 204 L1033.3 194.8" fill="none" stroke="#7a7a7a" stroke-width="1.1"/><path d="M1012.5 222.5 C1014 212 1019 204.6 1025.7 204.6 C1033 204.6 1036.5 212 1036 223.7" fill="none" stroke="#a8a8a8" stroke-width="1"/><rect x="860.7" y="260" width="1.2" height="37" fill="#7a7a7a"/><rect x="860.7" y="296" width="40" height="1.2" fill="#7a7a7a"/><polyline points="868.5,268.5 876.3,286.6 894.4,269.4" fill="none" stroke="#a0a0a0" stroke-width="1"/><polyline points="884.5,290.4 891.6,278.6" fill="none" stroke="#a0a0a0" stroke-width="1"/><polyline points="869.4,290.4 877.5,272.4 894.4,289.4 891.6,278.6" fill="none" stroke="#7a7a7a" stroke-width="1.1"/><circle cx="868.5" cy="268.5" r="2.4" fill="#fff" stroke="#7a7a7a" stroke-width="1"/><circle cx="894.4" cy="269.4" r="2.4" fill="#fff" stroke="#7a7a7a" stroke-width="1"/><circle cx="876.3" cy="286.6" r="2.4" fill="#fff" stroke="#7a7a7a" stroke-width="1"/><circle cx="884.5" cy="290.4" r="2.4" fill="#fff" stroke="#7a7a7a" stroke-width="1"/><circle cx="877.5" cy="272.4" r="2.6" fill="#7a7a7a"/><circle cx="891.6" cy="278.6" r="2.6" fill="#7a7a7a"/><circle cx="869.4" cy="290.4" r="2.6" fill="#7a7a7a"/><circle cx="894.4" cy="289.4" r="2.6" fill="#7a7a7a"/><rect x="930.8" y="260" width="1.2" height="37" fill="#7a7a7a"/><rect x="930.8" y="296" width="40" height="1.2" fill="#7a7a7a"/><polyline points="935.6,264.5 944.8,285 960.6,266 953.5,287.5" fill="none" stroke="#a8a8a8" stroke-width="1"/><polyline points="938.7,290.6 947.6,275.2 963.3,292.5 960.2,281.4" fill="none" stroke="#7a7a7a" stroke-width="1.1"/><rect x="860.9" y="357" width="1.2" height="37" fill="#7a7a7a"/><rect x="860.9" y="393" width="40" height="1.2" fill="#7a7a7a"/><circle cx="875.5" cy="366.8" r="6.3" fill="#7a7a7a"/><circle cx="887.7" cy="373" r="4.3" fill="#7a7a7a"/><circle cx="872.2" cy="380" r="5.6" fill="#fff" stroke="#7a7a7a" stroke-width="1.1"/><circle cx="887" cy="384.9" r="4.2" fill="#fff" stroke="#7a7a7a" stroke-width="1.1"/><rect x="930.9" y="357" width="1.2" height="37" fill="#7a7a7a"/><rect x="930.9" y="393" width="40" height="1.2" fill="#7a7a7a"/><defs><radialGradient id="ball" cx="0.4" cy="0.35" r="0.65"><stop offset="0" stop-color="#f4f4f4"/><stop offset="0.6" stop-color="#a8a8a8"/><stop offset="1" stop-color="#8a8a8a"/></radialGradient></defs><circle cx="948.5" cy="365.8" r="6.3" fill="url(#ball)"/><circle cx="960" cy="373" r="4.3" fill="url(#ball)"/><circle cx="945.3" cy="380" r="6.3" fill="url(#ball)"/><circle cx="959" cy="383.9" r="5.3" fill="url(#ball)"/><rect x="850" y="418" width="1.1" height="17" fill="#6a6a6a"/><rect x="850" y="434" width="19" height="1.1" fill="#6a6a6a"/><polygon points="862.5,418.0 863.9,419.4 862.5,420.79999999999995 861.1,419.4" fill="#5a5a5a"/><polygon points="866.6,420.90000000000003 868.0,422.3 866.6,423.7 865.2,422.3" fill="#5a5a5a"/><polygon points="854.4,423.90000000000003 855.8,425.3 854.4,426.7 853.0,425.3" fill="#5a5a5a"/><polygon points="860.3,423.0 861.6999999999999,424.4 860.3,425.79999999999995 858.9,424.4" fill="#5a5a5a"/><polygon points="857.5,425.8 858.9,427.2 857.5,428.59999999999997 856.1,427.2" fill="#5a5a5a"/><polygon points="862.5,425.90000000000003 863.9,427.3 862.5,428.7 861.1,427.3" fill="#5a5a5a"/><polygon points="856.5,429.1 857.9,430.5 856.5,431.9 855.1,430.5" fill="#5a5a5a"/><polygon points="856.5,420.90000000000003 857.9,422.3 856.5,423.7 855.1,422.3" fill="#b0b0b0"/><polygon points="864.4,423.1 865.8,424.5 864.4,425.9 863.0,424.5" fill="#b0b0b0"/><polygon points="853.5,427.8 854.9,429.2 853.5,430.59999999999997 852.1,429.2" fill="#b0b0b0"/><polygon points="860.3,427.0 861.6999999999999,428.4 860.3,429.79999999999995 858.9,428.4" fill="#b0b0b0"/><polygon points="865.4,427.8 866.8,429.2 865.4,430.59999999999997 864.0,429.2" fill="#b0b0b0"/><polygon points="862.4,430.0 863.8,431.4 862.4,432.79999999999995 861.0,431.4" fill="#b0b0b0"/><rect x="882" y="435" width="13" height="1" fill="#444"/></svg>
<span class="tx" style="left:855.00px;top:151px;font-size:15.5px;color:#555555;font-weight:bold;transform:scaleX(0.9329)">Scatter</span>
<span class="tx" style="left:854.87px;top:318px;font-size:15.5px;color:#555555;font-weight:bold;transform:scaleX(0.9286)">Bubble</span>
<span class="tx" style="left:881.01px;top:419px;font-size:14.5px;color:#444444;font-weight:normal;transform:scaleX(0.9943)">More Scatter Charts...</span>
<svg style="left:0;top:0" width="1061" height="447" viewBox="0 0 1061 447">
<g fill="none" stroke="#ed1c24" stroke-width="8" stroke-linejoin="bevel">
<polygon points="164.5,66.1 215.6,119.8 189,119.8 189,172.8 138,172.8 138,119.8 113.4,119.8"/>
<polygon points="718.2,114.8 773.8,114.8 773.8,100 832,130.3 773.8,161 773.8,146.5 718.2,146.5"/>
<polygon points="716.7,197.6 773.7,197.6 773.7,182.5 834.5,213.3 773.7,244 773.7,228 716.7,228"/>
</g></svg>
</body></html>
